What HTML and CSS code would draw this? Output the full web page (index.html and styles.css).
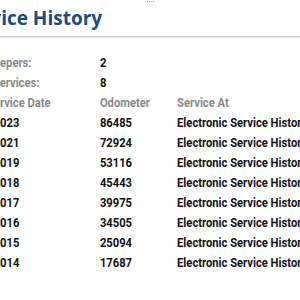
FILE: index.html
```html
<!DOCTYPE html>
<html lang="en">
<head>
    <meta charset="UTF-8">
    <meta name="viewport" content="width=device-width, initial-scale=1.0">
    <title>Service History</title>
    <link rel="stylesheet" href="styles.css">
</head>
<body>
    <div class="grip"><span></span><span></span><span></span><span></span></div>

    <header class="page-header">
        <h1>Service History</h1>
    </header>

    <div class="history">
        <div class="summary">
            <span class="label">Keepers:</span>
            <span class="value">2</span>
            <span class="label label-services">Services:</span>
            <span class="value">8</span>
        </div>

        <table class="services">
            <thead>
                <tr>
                    <th class="col-date">Service Date</th>
                    <th class="col-odo">Odometer</th>
                    <th>Service At</th>
                </tr>
            </thead>
            <tbody id="service-rows"></tbody>
        </table>
    </div>

    <script>
        const services = [
            ['2023', '86485'],
            ['2021', '72924'],
            ['2019', '53116'],
            ['2018', '45443'],
            ['2017', '39975'],
            ['2016', '34505'],
            ['2015', '25094'],
            ['2014', '17687']
        ];

        const rows = services.map(([date, odo]) =>
            `<tr><td class="date">${date}</td><td>${odo}</td><td>Electronic Service History</td></tr>`
        ).join('');
        document.getElementById('service-rows').innerHTML = rows;
    </script>
</body>
</html>
```

FILE: styles.css
```css
body {
    margin: 0;
    padding: 0;
    background: #fff;
    overflow: hidden;
    font-family: "Roboto", sans-serif;
}

.grip {
    display: flex;
    justify-content: center;
    gap: 1px;
    height: 5px;
    padding-top: 1px;
}

.grip span {
    width: 1px;
    height: 1px;
    background: #b5b5b5;
}

.page-header {
    height: 30px;
    border-bottom: 1px solid #c9c9c9;
    box-shadow: 0 1px 0 #e6e6e6;
    overflow: hidden;
}

.page-header h1 {
    margin: 0 0 0 -40px;
    font-family: "Open Sans", sans-serif;
    font-size: 19px;
    font-weight: 700;
    line-height: 24px;
    color: #1c4b86;
    white-space: nowrap;
}

/* narrow the table text, the app uses a condensed face */
.history {
    margin-left: -13px;
    padding-top: 15px;
    font-size: 13.5px;
    white-space: nowrap;
    transform: scaleX(0.83);
    transform-origin: 0 0;
}

.summary {
    display: grid;
    grid-template-columns: 136px auto;
    grid-auto-rows: 20px;
    align-items: center;
}

.label {
    color: #8a8a8a;
    font-weight: 700;
}

.label-services {
    padding-left: 7px;
}

.value {
    color: #141414;
    font-weight: 700;
}

.services {
    width: max-content;
    border-collapse: collapse;
}

.services th,
.services td {
    padding: 0;
    height: 20px;
    text-align: left;
    font-weight: 700;
}

.services th {
    color: #8a8a8a;
}

.services td {
    color: #141414;
}

.services td.date {
    padding-left: 8px;
}

.col-date {
    width: 136px;
}

.col-odo {
    width: 93px;
}
```
